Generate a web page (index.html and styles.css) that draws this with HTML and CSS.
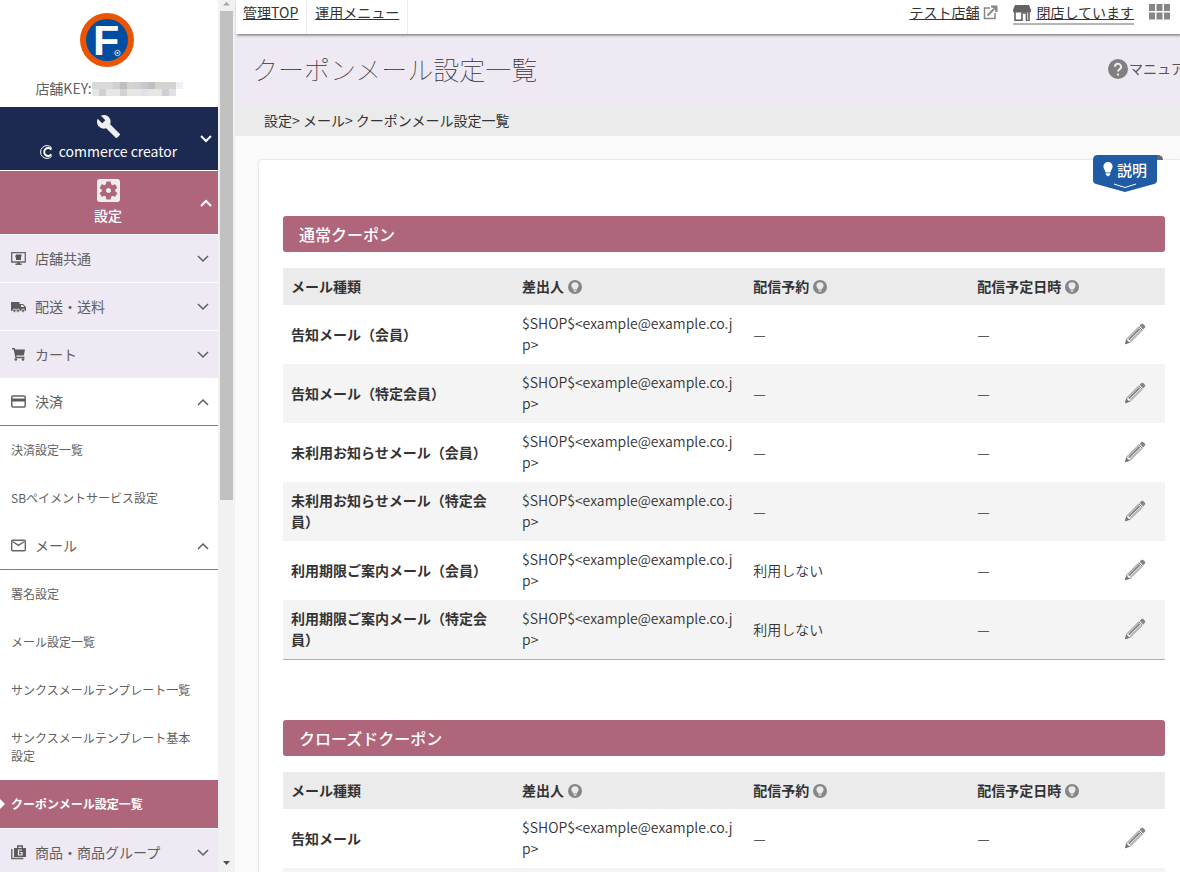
FILE: index.html
```html
<!DOCTYPE html>
<html lang="ja">
<head>
<meta charset="utf-8">
<title>クーポンメール設定一覧</title>
<link rel="stylesheet" href="styles.css">
</head>
<body>
<svg class="defs" aria-hidden="true">
  <symbol id="down" viewBox="0 0 12 8"><path d="M1 1l5 5 5-5" fill="none" stroke="currentColor"/></symbol>
  <symbol id="up" viewBox="0 0 12 8"><path d="M1 7l5-5 5 5" fill="none" stroke="currentColor"/></symbol>
  <symbol id="hint" viewBox="0 0 14 14"><circle cx="7" cy="7" r="7" fill="#868686"/><path d="M7 2.2a3.6 3.6 0 0 0-3.6 3.6c0 1.6 1.3 2.1 1.8 3.6h3.6c.5-1.5 1.8-2 1.8-3.6A3.6 3.6 0 0 0 7 2.2z" fill="#ebebeb"/><path d="M5.6 10.2h2.8v1.6H5.6z" fill="#ddd"/></symbol>
  <symbol id="pencil" viewBox="0 0 22 22"><path d="M15.6 2.8l1.6-1.6c.8-.8 1.7-.6 2.4.1l1.1 1.1c.7.7.8 1.6.1 2.3l-1.6 1.7z" fill="#858585"/><path d="M14.8 3.8l3.5 3.5L6.2 19.2l-4.8 1.6 1.5-5z" fill="#fff" stroke="#858585"/><path d="M15.6 5.8L4.8 16.6" stroke="#858585" stroke-width="2"/><path d="M17 7.2L6.4 17.8" stroke="#a8a8a8"/><path d="M2.5 16.6l3 2.8-4.6 1.8z" fill="#777"/></symbol>
</svg>
<div class="app">
  <aside class="sidebar">
    <div class="brand">
      <svg class="logo" viewBox="0 0 54 54" role="img" aria-label="F"><circle cx="27" cy="27" r="27" fill="#ea5504"/><circle cx="27" cy="27" r="21" fill="#004ea2"/><text x="13" y="42" class="logo-f">F</text><circle cx="37.500" cy="40" r="2.700" fill="none" stroke="#fff" stroke-width=".8"/><circle cx="37.500" cy="40" r="1" fill="#fff"/></svg>
      <p class="shop-key">店舗KEY:<svg class="mosaic" viewBox="0 0 91 14" aria-hidden="true"><path fill="#d9d9d9" d="M0 0h21v7H0zM49 0h7v7h-7z"/><path fill="#e6e6e6" d="M0 7h7v7H0zM14 7h14v7H14zM35 7h14v7H35zM56 7h14v7H56z"/><path fill="#d0d0d4" d="M21 0h7v7h-7zM7 7h7v7H7zM42 0h7v7h-7zM70 7h7v7h-7z"/><path fill="#bfbfbf" d="M28 0h7v7h-7zM56 0h7v7h-7z"/><path fill="#d5d3d0" d="M35 0h7v7h-7zM63 0h7v7h-7zM28 7h7v7h-7zM70 0h14v7H70z"/><path fill="#c5c8d3" d="M49 0h7v7h-7z"/><path fill="#e2e2e2" d="M49 7h7v7h-7zM77 7h7v7h-7z"/><path fill="#edf1f6" d="M84 0h7v7h-7z"/></svg></p>
    </div>
    <nav class="menu">
      <button class="major navy" type="button">
        <svg class="icon-major" viewBox="1 1 22 22"><path fill="#eee" d="M22.7 19l-9.1-9.1c.9-2.3.4-5-1.5-6.9-2-2-5-2.4-7.4-1.3L9 6 6 9 1.6 4.7C.4 7.1.9 10.1 2.9 12.1c1.9 1.9 4.6 2.4 6.9 1.5l9.1 9.1c.4.4 1 .4 1.4 0l2.3-2.3c.5-.4.5-1.1.1-1.4z"/></svg>
        <span class="major-label"><svg class="cc" viewBox="0 0 14 14"><path d="M12.600 2.600A6.400 6.400 0 1 0 12.600 11.400" fill="none" stroke="#fff"/><path d="M12.400 4.600A4 4 0 1 0 12.400 9.400" fill="none" stroke="#fff" stroke-width="1.900"/></svg>commerce creator</span>
        <svg class="major-arrow"><use href="#down"/></svg>
      </button>
      <button class="major rose" type="button">
        <svg class="icon-major" viewBox="3 3 18 18"><path fill="#eee" d="M12 10c-1.1 0-2 .9-2 2s.9 2 2 2 2-.9 2-2-.9-2-2-2zm7-7H5c-1.11 0-2 .9-2 2v14c0 1.1.89 2 2 2h14c1.11 0 2-.9 2-2V5c0-1.1-.89-2-2-2zm-1.75 9c0 .23-.02.46-.05.68l1.48 1.16c.13.11.17.3.08.45l-1.4 2.42c-.09.15-.27.21-.43.15l-1.74-.7c-.36.28-.76.51-1.18.69l-.26 1.85c-.03.17-.18.3-.35.3h-2.8c-.17 0-.32-.13-.35-.29l-.26-1.85c-.43-.18-.82-.41-1.18-.69l-1.74.7c-.16.06-.34 0-.43-.15l-1.4-2.42c-.09-.15-.05-.34.08-.45l1.48-1.16c-.03-.23-.05-.46-.05-.69 0-.23.02-.46.05-.68l-1.48-1.16c-.13-.11-.17-.3-.08-.45l1.4-2.42c.09-.15.27-.21.43-.15l1.74.7c.36-.28.76-.51 1.18-.69l.26-1.85c.03-.17.18-.3.35-.3h2.8c.17 0 .32.13.35.29l.26 1.85c.43.18.82.41 1.18.69l1.74-.7c.16-.06.34 0 .43.15l1.4 2.42c.09.15.05.34-.08.45l-1.48 1.16c.03.23.05.46.05.69z"/></svg>
        <span class="major-label">設定</span>
        <svg class="major-arrow"><use href="#up"/></svg>
      </button>
      <button class="group" type="button"><svg class="icon" viewBox="0 0 15 15"><path d="M.7 1.700h13.600v9.300H.7z" fill="none" stroke="#666" stroke-width="1.300"/><path d="M6 11h3v1.600h1.600V14H4.400v-1.400H6z" fill="#666"/><path d="M5 3.500h5.500v2H10V9H5V6.500h-.6V5z" fill="#555"/></svg><span>店舗共通</span><svg class="arrow"><use href="#down"/></svg></button>
      <button class="group" type="button"><svg class="icon" viewBox="0 0 15 15"><path d="M0 3h8.500v2H12l3 3v4H0z" fill="#5b5b5b"/><path d="M10 6h1.700l1.800 2H10z" fill="#eee9f3"/><g fill="#666" stroke="#eee9f3" stroke-width=".8"><circle cx="3.400" cy="11.700" r="1.700"/><circle cx="7" cy="11.700" r="1.700"/><circle cx="12" cy="11.700" r="1.700"/></g></svg><span>配送・送料</span><svg class="arrow"><use href="#down"/></svg></button>
      <button class="group last" type="button"><svg class="icon" viewBox="0 0 15 15"><path d="M1 1.800h2.300L5 10.500h8.500" fill="none" stroke="#5b5b5b" stroke-width="1.400"/><path d="M3.500 2.500H14l-1.200 6H4.700z" fill="#5b5b5b"/><circle cx="4.800" cy="12.500" r="1.300" fill="#5b5b5b"/><circle cx="12" cy="12.500" r="1.300" fill="#5b5b5b"/></svg><span>カート</span><svg class="arrow"><use href="#down"/></svg></button>
      <button class="group open" type="button"><svg class="icon" viewBox="0 0 15 15"><rect x=".8" y="2" width="13.400" height="11" rx="1" fill="none" stroke="#666" stroke-width="1.500"/><path d="M1 4.500h13v3H1z" fill="#5b5b5b"/></svg><span>決済</span><svg class="arrow"><use href="#up"/></svg></button>
      <a class="item" href="#">決済設定一覧</a>
      <a class="item" href="#">SBペイメントサービス設定</a>
      <button class="group open" type="button"><svg class="icon" viewBox="0 0 15 15"><rect x=".7" y="2.200" width="13.600" height="10.600" rx="1" fill="none" stroke="#666" stroke-width="1.400"/><path d="M1.500 3.500l6 3.800 6-3.800" fill="none" stroke="#666" stroke-width="1.400"/></svg><span>メール</span><svg class="arrow"><use href="#up"/></svg></button>
      <a class="item" href="#">署名設定</a>
      <a class="item" href="#">メール設定一覧</a>
      <a class="item" href="#">サンクスメールテンプレート一覧</a>
      <a class="item" href="#">サンクスメールテンプレート基本設定</a>
      <a class="item current" href="#" aria-current="page">クーポンメール設定一覧</a>
      <button class="group" type="button"><svg class="icon" viewBox="0 0 15 15"><path d="M.8 4v9.500h11.500" fill="none" stroke="#666" stroke-width="1.400"/><path d="M3 3h12v9H3z" fill="#5b5b5b"/><path d="M6.700 3V1h4.600v2" fill="none" stroke="#5b5b5b" stroke-width="1.400"/><path d="M11 5H7.500v5H11V7.500H9" fill="none" stroke="#eee9f3" stroke-width="1.200"/></svg><span>商品・商品グループ</span><svg class="arrow"><use href="#down"/></svg></button>
    </nav>
  </aside>
  <div class="scroll" aria-hidden="true">
    <svg class="scroll-arrow" viewBox="0 0 17 11"><path d="M5 5.500L8.500 2 12 5.500z" fill="#a3a3a3"/></svg>
    <div class="scroll-track"><div class="scroll-thumb"></div></div>
    <svg class="scroll-arrow" viewBox="0 0 17 11"><path d="M5 0l3.500 4L12 0z" fill="#505050"/></svg>
  </div>
  <main class="main">
    <header class="topbar">
      <div class="tab"><a href="#">管理TOP</a></div>
      <div class="tab"><a href="#">運用メニュー</a></div>
      <div class="tools">
        <span class="tool"><a href="#">テスト店舗</a><svg class="ext" viewBox="0 0 15 15"><path d="M7 3H1.500v10.500H12V8" fill="none" stroke="#868686" stroke-width="1.500"/><path d="M4.500 10.500L11 4" stroke="#868686" stroke-width="2"/><path d="M8 .500h6.500V7h-2L12 4.500 10.500 3 8 2.500z" fill="#868686"/></svg></span>
        <span class="tool closed"><svg class="store" viewBox="0 0 18 16"><path d="M2 0h14l2 5v1.500q-1 1.500-3 1H3q-2 .5-3-1V5z" fill="#636363"/><path d="M2 7v8.200h7V8h4.500v8H16V7" fill="none" stroke="#5f5f5f" stroke-width="1.600"/></svg><a href="#">閉店しています</a></span>
        <svg class="apps" viewBox="0 0 21 16"><path d="M0 0h6v7H0zM7.500 0h6v7h-6zM15 0h6v7h-6zM0 8.500h6v7H0zM7.500 8.500h6v7h-6zM15 8.500h6v7h-6z" fill="#868686"/></svg>
      </div>
    </header>
    <div class="heading">
      <h1>クーポンメール設定一覧</h1>
      <a class="manual" href="#"><svg viewBox="0 0 20 20"><circle cx="10" cy="10" r="10" fill="#808080"/><path d="M7 7.800a3 3 0 1 1 4.500 2.500c-1 .6-1.500 1.100-1.500 2.300" fill="none" stroke="#eee9f3" stroke-width="2"/><path d="M9 14.500h2v2H9z" fill="#eee9f3"/></svg>マニュアル</a>
    </div>
    <div class="crumbs">設定&gt; メール&gt; クーポンメール設定一覧</div>
    <section class="card">
      <button class="ribbon" type="button"><svg class="ribbon-shape" viewBox="0 0 70 37"><path d="M60 0h6q4 1 4 5h-6z" fill="#666"/><path d="M5 0h59v25q0 3-3 4L32 37 3 29q-3-1-3-4V5q0-5 5-5z" fill="#1f5ca3"/><path d="M21 29l11 3.500L43 29" fill="none" stroke="#fff"/></svg><span class="ribbon-label"><svg class="bulb" viewBox="0 0 10 15"><path d="M5 0a4.600 4.600 0 0 0-4.600 4.600c0 2.200 1.600 3.200 2.200 5.900h4.800c.6-2.700 2.200-3.700 2.200-5.900A4.600 4.600 0 0 0 5 0zM2.800 11.300h4.400v1.500L5 14.500l-2.200-1.700z" fill="#fff"/></svg>説明</span></button>
      <h2>通常クーポン</h2>
      <table>
        <colgroup><col class="c1"><col class="c2"><col class="c3"><col class="c4"><col class="c5"></colgroup>
        <thead><tr><th>メール種類</th><th>差出人<svg class="hint"><use href="#hint"/></svg></th><th>配信予約<svg class="hint"><use href="#hint"/></svg></th><th>配信予定日時<svg class="hint"><use href="#hint"/></svg></th><th></th></tr></thead>
        <tbody>
          <tr><th>告知メール（会員）</th><td>$SHOP$&lt;example@example.co.jp&gt;</td><td>—</td><td>—</td><td><button class="edit" type="button" aria-label="編集"><svg><use href="#pencil"/></svg></button></td></tr>
          <tr><th>告知メール（特定会員）</th><td>$SHOP$&lt;example@example.co.jp&gt;</td><td>—</td><td>—</td><td><button class="edit" type="button" aria-label="編集"><svg><use href="#pencil"/></svg></button></td></tr>
          <tr><th>未利用お知らせメール（会員）</th><td>$SHOP$&lt;example@example.co.jp&gt;</td><td>—</td><td>—</td><td><button class="edit" type="button" aria-label="編集"><svg><use href="#pencil"/></svg></button></td></tr>
          <tr><th>未利用お知らせメール（特定会員）</th><td>$SHOP$&lt;example@example.co.jp&gt;</td><td>—</td><td>—</td><td><button class="edit" type="button" aria-label="編集"><svg><use href="#pencil"/></svg></button></td></tr>
          <tr><th>利用期限ご案内メール（会員）</th><td>$SHOP$&lt;example@example.co.jp&gt;</td><td>利用しない</td><td>—</td><td><button class="edit" type="button" aria-label="編集"><svg><use href="#pencil"/></svg></button></td></tr>
          <tr><th>利用期限ご案内メール（特定会員）</th><td>$SHOP$&lt;example@example.co.jp&gt;</td><td>利用しない</td><td>—</td><td><button class="edit" type="button" aria-label="編集"><svg><use href="#pencil"/></svg></button></td></tr>
        </tbody>
      </table>
      <h2>クローズドクーポン</h2>
      <table>
        <colgroup><col class="c1"><col class="c2"><col class="c3"><col class="c4"><col class="c5"></colgroup>
        <thead><tr><th>メール種類</th><th>差出人<svg class="hint"><use href="#hint"/></svg></th><th>配信予約<svg class="hint"><use href="#hint"/></svg></th><th>配信予定日時<svg class="hint"><use href="#hint"/></svg></th><th></th></tr></thead>
        <tbody>
          <tr><th>告知メール</th><td>$SHOP$&lt;example@example.co.jp&gt;</td><td>—</td><td>—</td><td><button class="edit" type="button" aria-label="編集"><svg><use href="#pencil"/></svg></button></td></tr>
          <tr><th></th><td></td><td></td><td></td><td></td></tr>
        </tbody>
      </table>
    </section>
  </main>
</div>
</body>
</html>
```
FILE: styles.css
```css
* { box-sizing: border-box; }
body {
  margin: 0;
  font: 14px/21px "Noto Sans CJK JP", sans-serif;
  color: #333;
  background: #fafafa;
}
button { font: inherit; color: inherit; border: 0; margin: 0; background: none; cursor: pointer; }
a { color: inherit; }
svg { display: block; flex: none; }
.defs { display: none; }

.app { display: flex; height: 100vh; overflow: hidden; }

/* sidebar */
.sidebar { flex: none; width: 218px; overflow: hidden; background: #fff; color: #5f5f5f; }
.brand { display: flex; flex-direction: column; align-items: center; height: 107px; padding-top: 13px; }
.logo { width: 54px; height: 54px; margin-right: 4px; }
.logo-f { font: bold 43px "Liberation Sans", sans-serif; fill: #fff; }
.shop-key { display: flex; align-items: center; margin: 11px 0 0; }
.mosaic { width: 91px; height: 14px; }

.menu { display: flex; flex-direction: column; }
.major {
  position: relative;
  display: flex; flex-direction: column; align-items: center;
  gap: 3px; height: 64px; padding: 8px 2px 0 0; border-bottom: 1px solid #fff;
  color: #fff; font-weight: 500;
}
.navy { background: #1c2951; font-weight: 400; }
.rose { background: #b0667a; }
.icon-major { width: 23px; height: 23px; }
.major-label { display: flex; align-items: center; gap: 6px; }
.cc { width: 14px; height: 14px; }
.major-arrow { position: absolute; right: 6px; top: 28px; width: 12px; height: 8px; stroke-width: 2; }
.group {
  display: flex; align-items: center; gap: 9px;
  height: 48px; padding: 0 9px 0 11px;
  background: #eee9f3; border-bottom: 1px solid #fff; text-align: left;
}
.group.last { height: 47px; border-bottom: 0; }
.group.open { background: #fff; border-bottom-color: #b0667a; }
.group span { flex: 1; }
.icon { width: 15px; height: 15px; }
.arrow { width: 12px; height: 8px; stroke-width: 1.500; }
.item { padding: 15px 24px 15px 11px; font-size: 12px; line-height: 18px; text-decoration: none; }
.current { position: relative; background: #b0667a; color: #fff; font-weight: bold; border-bottom: 1px solid #fff; }
.current::before {
  content: ""; position: absolute; left: 0; top: 19px;
  border: 5px solid transparent; border-left-color: #fff; border-right: 0;
}

.scroll { flex: none; display: flex; flex-direction: column; width: 17px; background: #f1f1f1; }
.scroll-arrow { width: 17px; height: 11px; }
.scroll-track { flex: 1; padding: 0 2px; }
.scroll-thumb { height: 57.500%; background: #c1c1c1; }

/* content */
.main { flex: 1; min-width: 0; overflow: hidden; }
.topbar {
  position: relative; display: flex; height: 34px; margin-left: 1px;
  background: #fff; box-shadow: 1px 1px 3px rgba(0, 0, 0, .6);
}
.tab { padding: 2px 8px 0 7px; border-right: 1px solid #ebebeb; }
.tab + .tab { padding-left: 8px; }
.tools { display: flex; align-items: flex-start; gap: 15px; margin-left: auto; padding: 2px 10px 0 0; }
.tool { display: flex; align-items: center; gap: 4px; }
.ext { width: 15px; height: 15px; }
.closed { gap: 5px; border-bottom: 2px solid #b5b5b5; }
.store { width: 18px; height: 16px; }
.apps { width: 21px; height: 16px; margin-top: 2px; }
.heading {
  display: flex; align-items: center; justify-content: space-between;
  height: 71px; padding: 0 0 2px 17px; background: #eee9f3;
}
h1 { margin: 0; font-size: 26px; line-height: 36px; font-weight: 100; }
.manual { display: flex; align-items: center; gap: 1px; width: 72px; white-space: nowrap; text-decoration: none; color: #555; }
.manual svg { width: 20px; height: 20px; }
.crumbs { padding: 5px 29px; background: #ebebeb; }

.card {
  position: relative; margin: 24px 0 0 24px; padding: 56px 15px 0 24px; min-height: 100vh;
  background: #fff; border-radius: 3px 0 0 0; box-shadow: 0 0 2px rgba(0, 0, 0, .25);
}
.ribbon { position: absolute; top: -5px; right: 17px; width: 70px; height: 37px; padding: 0; color: #fff; }
.ribbon-shape { width: 70px; height: 37px; }
.ribbon-label {
  position: absolute; left: 10px; top: 4px;
  display: flex; align-items: center; gap: 4px; font-size: 15px; font-weight: 500;
}
.bulb { width: 10px; height: 15px; }
h2 {
  margin: 0 0 16px; padding: 6px 16px; border-radius: 3px;
  background: #b0667a; color: #fff; font-size: 16px; line-height: 24px; font-weight: 500;
}
table { width: 100%; margin-bottom: 60px; table-layout: fixed; border-collapse: collapse; border-bottom: 1px solid #b0b0b0; }
.c1, .c2 { width: 26.200%; }
.c3 { width: 25.400%; }
.c5 { width: 60px; }
th, td { padding: 8px 8px 9px; text-align: left; vertical-align: middle; }
td { word-break: break-all; font-weight: 350; }
thead th { padding: 8px; background: #ebebeb; }
tbody tr:nth-child(even) { background: #f4f4f4; }
.hint { display: inline-block; width: 14px; height: 14px; margin-left: 4px; vertical-align: -2px; }
.edit { display: block; width: 22px; height: 22px; margin: 0 auto; padding: 0; }
.edit svg { width: 22px; height: 22px; }
```
